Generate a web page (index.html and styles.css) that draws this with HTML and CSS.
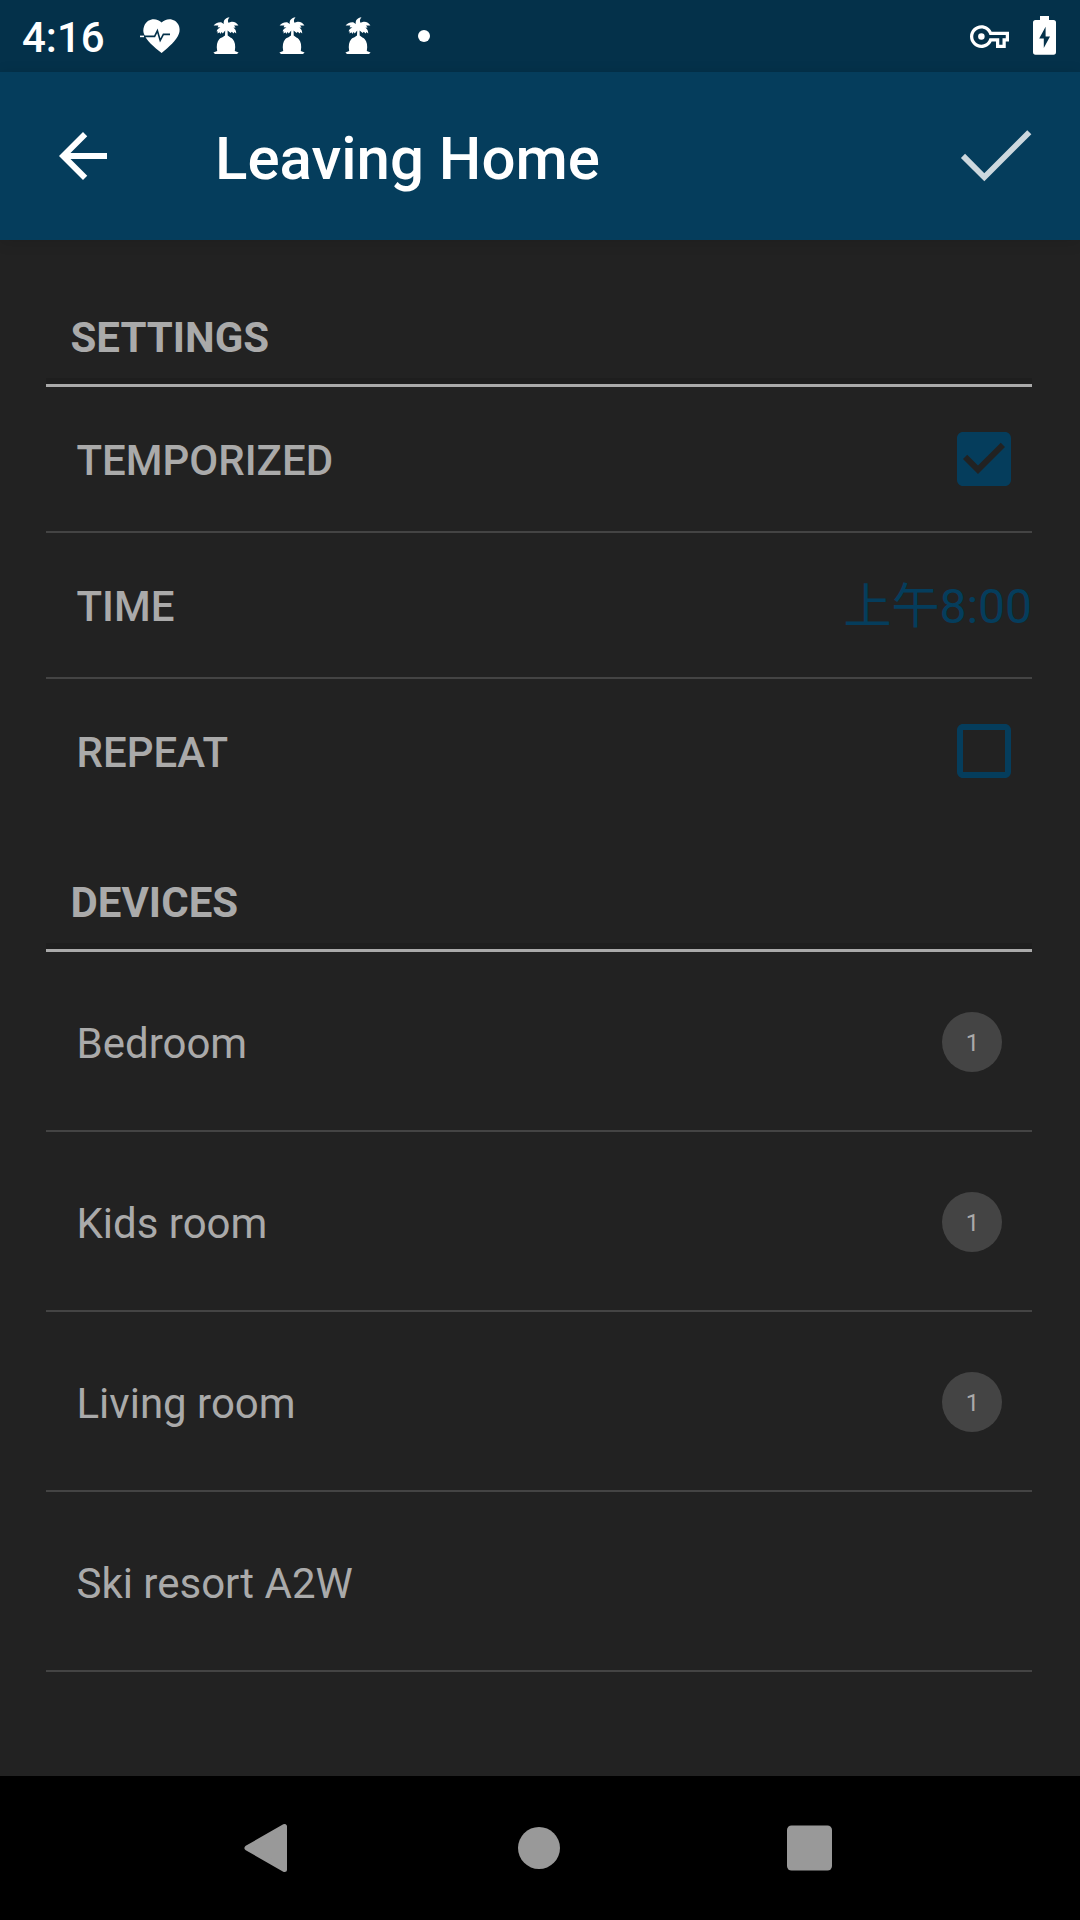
FILE: index.html
```html
<!DOCTYPE html>
<html lang="en">
<head>
<meta charset="utf-8">
<title>Leaving Home</title>
<link rel="stylesheet" href="styles.css">
</head>
<body>
<svg class="defs" aria-hidden="true">
  <symbol id="palm" viewBox="0 0 26 38">
    <path d="M16.500 0.300C14.800 2.200 14.600 3.800 15.400 5.800L18.600 4.800C21.600 4.600 24 6 25.400 8.600L21 8.600 22.600 10.600 20.400 10.800C22.200 12 23.400 14 23.200 16.400L21.400 15 20.600 16.600 18.800 14.800 17.600 16 14.600 13.400 14.700 18.400C16.600 20.200 18.200 20.400 19.600 22 22 24.600 22.800 28.500 21.800 34L25.600 35.400 24 37 2 37 0.400 35.400 4.200 34C3.200 28.500 4 24.600 6.400 22 7.800 20.400 10.200 20.200 12 18.400L12.200 13.600 9.800 16.600 8.600 15 7.200 17 6.600 15.200 4.600 16.600 4.600 14.200 3.600 14.600C4 12.400 5.400 11.200 7.400 10.400L4.600 10.200 5.400 8.600 0.600 8.600C2.200 6.200 4.600 5 8.200 5.200L10.800 7C10.200 3.200 12.400 1 16.500 0.300Z"/>
  </symbol>
</svg>

<header class="status-bar">
  <span class="clock">4:16</span>
  <div class="notifications">
    <svg class="icon-heart" viewBox="0 0 40 34">
      <path d="M21.600 3.600C17.400 -1.200 7.600 -1.600 4.200 7 3.200 9.600 3 12 3.800 14.600 6.200 22 14 28 21.600 34 28.800 28 36.400 22 39 14.600 39.800 12 39.800 9.600 39 7 35.600 -1.600 25.800 -1.200 21.600 3.600Z"/>
      <path class="pulse" d="M1 17.400H14.600L17.400 11.800 20.200 21.400 23.400 15.400H30"/>
      <path class="pulse-tail" d="M0 17.400H4"/>
    </svg>
    <svg class="icon-palm"><use href="#palm"/></svg>
    <svg class="icon-palm"><use href="#palm"/></svg>
    <svg class="icon-palm"><use href="#palm"/></svg>
    <span class="more-dot"></span>
  </div>
  <div class="system-icons">
    <svg class="icon-key" viewBox="0 5 24 14">
      <path d="M22 19h-6v-4h-2.680c-1.140 2.420-3.600 4-6.320 4-3.860 0-7-3.140-7-7s3.140-7 7-7c2.720 0 5.170 1.580 6.320 4H24v6h-2v4zm-4-2h2v-4h2v-2H11.940l-.23-.67C11.010 8.340 9.110 7 7 7c-2.760 0-5 2.240-5 5s2.240 5 5 5c2.110 0 4.010-1.340 4.710-3.330l.23-.67H18v4z"/>
      <circle cx="7" cy="12" r="2"/>
    </svg>
    <svg class="icon-battery" viewBox="0 0 23 39">
      <path fill-rule="evenodd" d="M7 0H16V4H20.500Q23 4 23 6.500V36Q23 38.700 20.500 38.700H2.500Q0 38.700 0 36V6.500Q0 4 2.500 4H7ZM12.600 10.800 6.200 22.400H10.800V32L17 20.400H12.600Z"/>
    </svg>
  </div>
</header>

<nav class="app-bar">
  <svg class="icon-back" viewBox="0 0 24 24"><path d="M20 11H7.830l5.590-5.590L12 4l-8 8 8 8 1.410-1.410L7.830 13H20v-2z"/></svg>
  <h1 class="title">Leaving Home</h1>
  <svg class="icon-done" viewBox="0 0 72 54"><path d="M3 26.900 24.300 48.200 69.300 3.200"/></svg>
</nav>

<main class="content">
  <section class="group">
    <h2 class="group-title">SETTINGS</h2>
    <div class="setting">
      <span class="setting-label">TEMPORIZED</span>
      <svg class="checkbox" viewBox="0 0 24 24"><path d="M19 3H5c-1.110 0-2 .9-2 2v14c0 1.100.89 2 2 2h14c1.110 0 2-.9 2-2V5c0-1.100-.89-2-2-2zm-9 14l-5-5 1.410-1.410L10 14.170l7.590-7.590L19 8l-9 9z"/></svg>
    </div>
    <div class="setting">
      <span class="setting-label">TIME</span>
      <span class="time" lang="zh">上午8:00</span>
    </div>
    <div class="setting">
      <span class="setting-label">REPEAT</span>
      <svg class="checkbox" viewBox="0 0 24 24"><path d="M19 5v14H5V5h14m0-2H5c-1.100 0-2 .9-2 2v14c0 1.100.9 2 2 2h14c1.100 0 2-.9 2-2V5c0-1.100-.9-2-2-2z"/></svg>
    </div>
  </section>

  <section class="group">
    <h2 class="group-title">DEVICES</h2>
    <div class="room"><span class="room-name">Bedroom</span><span class="badge">1</span></div>
    <div class="room"><span class="room-name">Kids room</span><span class="badge">1</span></div>
    <div class="room"><span class="room-name">Living room</span><span class="badge">1</span></div>
    <div class="room"><span class="room-name">Ski resort A2W</span></div>
  </section>
</main>

<footer class="nav-bar">
  <svg class="nav-icon" viewBox="0 0 60 60"><path class="nav-back" d="M46.500 8.500V51.500L9 30Z"/></svg>
  <svg class="nav-icon" viewBox="0 0 60 60"><circle cx="30" cy="30" r="21"/></svg>
  <svg class="nav-icon" viewBox="0 0 60 60"><rect x="7" y="7.500" width="45" height="45" rx="4.500"/></svg>
</footer>
</body>
</html>
```

FILE: styles.css
```css
* {
  box-sizing: border-box;
}

body {
  margin: 0;
  width: 1080px;
  height: 1920px;
  display: flex;
  flex-direction: column;
  overflow: hidden;
  background: #222;
  color: #aaa;
  font-family: Roboto, "Noto Sans CJK SC", sans-serif;
}

svg {
  display: block;
  flex: none;
  fill: currentColor;
}

.defs {
  position: absolute;
  width: 0;
  height: 0;
}

/* Status bar */
.status-bar {
  display: flex;
  align-items: center;
  height: 72px;
  padding: 0 24px 0 22px;
  background: #04314a;
  color: #fff;
}

.clock {
  width: 118px;
  padding-top: 4px;
  font-size: 42px;
  font-weight: 500;
  line-height: 48px;
}

.notifications {
  display: flex;
  align-items: center;
}

.icon-heart {
  width: 40px;
  height: 34px;
  margin-right: 33px;
}

.pulse,
.pulse-tail {
  fill: none;
  stroke: #04314a;
  stroke-width: 1.6;
}

.pulse-tail {
  stroke: #fff;
}

.icon-palm {
  width: 26px;
  height: 38px;
  margin-right: 40px;
}

.more-dot {
  width: 12px;
  height: 12px;
  margin-left: 7px;
  border-radius: 50%;
  background: #fff;
}

.system-icons {
  display: flex;
  align-items: center;
  gap: 24px;
  margin-left: auto;
}

.icon-key {
  width: 39px;
  height: 23px;
  margin-top: 1px;
}

.icon-battery {
  width: 23px;
  height: 39px;
  margin-bottom: 1px;
}

/* App bar */
.app-bar {
  display: flex;
  align-items: center;
  height: 168px;
  padding: 0 48px 0 47px;
  background: #053d5c;
  color: #fff;
  box-shadow: 0 2px 14px rgba(0, 0, 0, 0.12);
}

.icon-back {
  width: 72px;
  height: 72px;
}

.title {
  flex: 1;
  margin: 0;
  padding: 5px 0 0 96px;
  font-size: 60px;
  font-weight: 500;
  line-height: 72px;
}

.icon-done {
  width: 72px;
  height: 54px;
  fill: none;
  stroke: #cdd8de;
  stroke-width: 5.8;
}

/* Content */
.content {
  flex: 1;
  padding: 36px 48px 0 46px;
}

.group-title {
  display: flex;
  align-items: center;
  height: 111px;
  margin: 0;
  padding: 15px 24.5px 0;
  border-bottom: 3px solid #aaa;
  box-shadow: inset 0 -6px #1e1e1e;
  font-size: 42px;
  font-weight: 700;
}

.group + .group .group-title {
  height: 127px;
  padding-top: 31px;
}

.setting {
  display: flex;
  align-items: center;
  justify-content: space-between;
  height: 146px;
  padding-left: 30.5px;
  border-bottom: 2px solid #444;
}

.setting:last-child {
  border-bottom-color: transparent;
}

.setting-label {
  padding-top: 3px;
  font-size: 42px;
  font-weight: 500;
}

.checkbox {
  width: 72px;
  height: 72px;
  margin-right: 12px;
  fill: #053d5c;
}

.time {
  padding-top: 4px;
  color: #053d5c;
  font-size: 48px;
  line-height: 56px;
}

.room {
  display: flex;
  align-items: center;
  justify-content: space-between;
  height: 180px;
  padding: 2px 30px 0 30.5px;
  border-bottom: 2px solid #444;
}

.room-name {
  padding-top: 3px;
  font-size: 42px;
}

.badge {
  display: flex;
  align-items: center;
  justify-content: center;
  width: 60px;
  height: 60px;
  padding: 1px 0 0 1px;
  border-radius: 50%;
  background: #444;
  font-size: 24px;
}

/* System navigation */
.nav-bar {
  display: flex;
  align-items: center;
  justify-content: space-between;
  height: 144px;
  padding: 0 240px 0 238px;
  background: #000;
  color: #999;
}

.nav-icon {
  width: 60px;
  height: 60px;
}

.nav-back {
  stroke: #999;
  stroke-width: 5;
  stroke-linejoin: round;
}
```
